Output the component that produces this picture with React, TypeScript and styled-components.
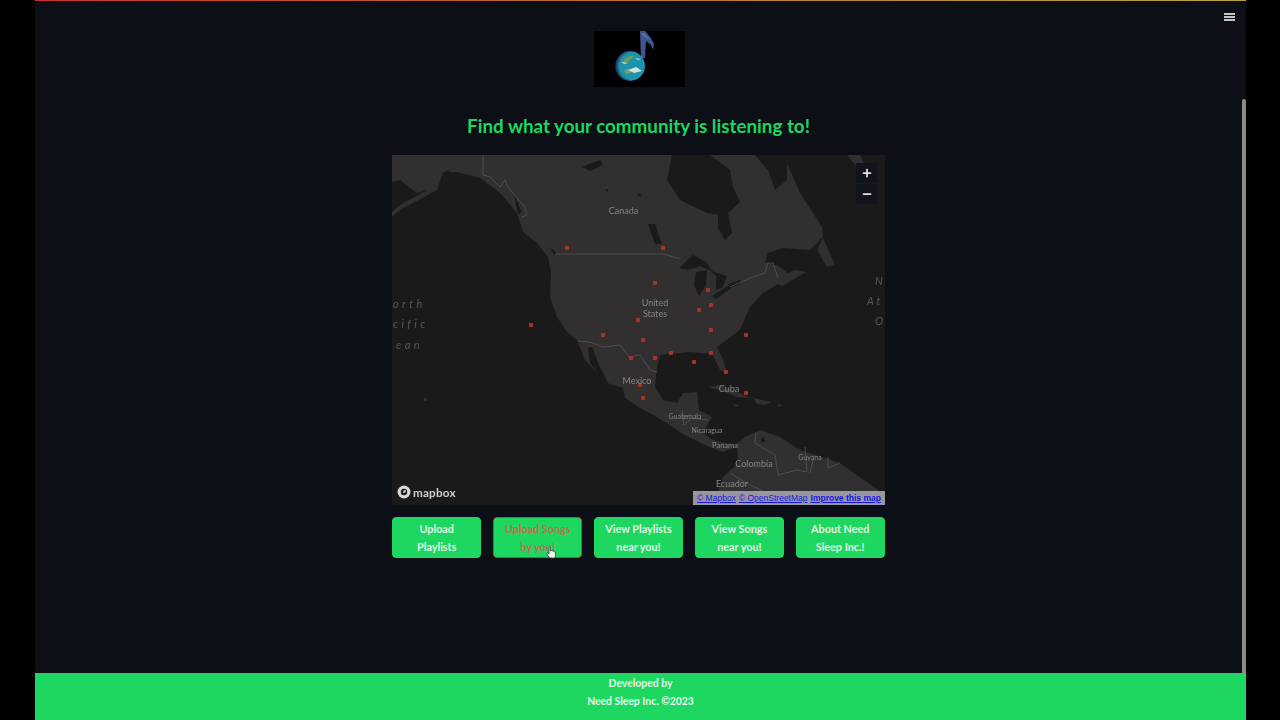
import React from 'react';
import styled, { createGlobalStyle } from 'styled-components';
import { Plus, Minus } from 'lucide-react';

const GlobalStyle = createGlobalStyle`
  html, body {
    margin: 0;
    padding: 0;
    height: 100%;
    background: #000;
    overflow: hidden;
  }
`;

const navItems: { top: string; bottom: string; hovered?: boolean }[] = [
  { top: 'Upload', bottom: 'Playlists' },
  { top: 'Upload Songs', bottom: 'by you!', hovered: true },
  { top: 'View Playlists', bottom: 'near you!' },
  { top: 'View Songs', bottom: 'near you!' },
  { top: 'About Need', bottom: 'Sleep Inc.!' },
];

// map shapes are in page coordinates, the svg viewBox starts at the map corner
const LAND =
  '392,155 787,155 787,163 800,193 822,227 823,237 810,250 783,248 768,253 765,262 778,266 788,273 795,270 806,272 782,286 778,284 763,293 750,307 740,330 717,347 723,360 727,373 720,370 712,354 690,352 660,355 657,367 655,387 663,400 677,403 683,393 697,392 699,410 712,417 703,433 713,440 735,445 745,437 760,430 780,437 800,450 840,463 878,490 880,505 718,505 718,493 723,477 738,463 737,447 723,452 707,446 683,434 668,424 653,415 640,408 625,398 623,388 607,383 585,360 577,340 567,332 557,317 550,297 551,273 548,257 537,243 523,232 517,213 500,193 480,178 457,172 443,173 437,190 400,210 392,217';

const WATER = [
  '392,182 400,180 417,193 428,190 400,205 392,212',
  '672,155 667,180 680,200 707,213 718,215 718,228 725,240 732,233 728,213 740,202 733,187 730,170 710,155',
  '755,155 768,170 775,190 787,180 787,155',
  '679,268 693,255 706,262 713,272 700,266 688,270',
  '696,272 707,270 706,285 699,296 694,285',
  '711,271 727,276 722,288 716,290 716,276',
  '712,296 728,286 733,287 716,299',
  '728,284 741,280 740,284 730,288',
  '648,224 655,224 662,244 655,244',
  '582,167 600,160 603,165 590,171',
  '605,190 608,189 608,192',
  '636,195 640,193 642,197',
  '550,248 556,252 555,256',
  '588,348 592,347 598,363 608,383 603,380 590,363',
  '443,173 448,170 452,176 438,190',
  '514,195 522,212 518,214',
  '760,360 762,358 763,361',
  '761,440 763,436 765,441 762,443',
  '788,253 802,254 796,262 789,260',
];

const ISLANDS = [
  '847,155 857,167 867,170 860,155',
  '817,250 823,238 835,265 827,267',
  '708,387 720,385 740,393 750,398 737,397 720,390',
  '753,398 772,402 765,405 757,404',
  '733,404 739,405 736,407',
  '777,404 783,405 779,407',
  '424,398 427,398 427,401 424,401',
];

const BORDERS = [
  '555,254 664,254 667,255 680,259',
  '730,287 750,278 765,273 768,263 773,263 778,278',
  '483,155 483,175 490,177 500,187 505,180 508,187 525,207 527,215 522,217',
  '578,341 590,342 603,347 620,345 630,358 637,355 640,355 650,370 657,372',
  '682,410 684,425 692,418 708,420',
  '756,433 755,443 775,455 778,475 797,470 807,472 805,447',
  '813,460 810,473',
  '828,457 828,468 840,463',
  '730,473 750,485 767,493',
];

const DOTS: [number, number][] = [
  [567, 248], [663, 248], [655, 283], [708, 290], [711, 305], [699, 310],
  [638, 320], [711, 330], [746, 335], [531, 325], [603, 335], [643, 340],
  [631, 358], [655, 358], [671, 353], [694, 362], [711, 353], [726, 372],
  [746, 393], [643, 398], [640, 385],
];

const Logo = () => (
  <LogoBox>
    <svg width="91" height="56" viewBox="594 31 91 56">
      <defs>
        <radialGradient id="halo" cx="0.6" cy="0.5" r="0.6">
          <stop offset="0.75" stopColor="#1d93ad" />
          <stop offset="0.9" stopColor="#23476b" />
          <stop offset="1" stopColor="#15233d" />
        </radialGradient>
      </defs>
      <path
        d="M640 31 L645 31 L651 38 L654 44 L653 50 L651 45 L646 41 L645 58 L641 58 Z"
        fill="#3d5590"
      />
      <path d="M641 33 L644 33 L650 40 L645 37 Z" fill="#5a72ad" />
      <circle cx="630" cy="66" r="15" fill="url(#halo)" />
      <path d="M622 62 C625 57 630 55 634 56 L630 60 L625 64 Z" fill="#6f9a5a" />
      <path d="M624 71 C628 67 632 70 631 73 L626 74 Z" fill="#7a9f66" />
      <path d="M628 70 L636 67 L642 71 L634 73 Z" fill="#d5e2d8" />
      <path d="M621 62 L628 63 L624 64 Z M635 58 L641 59 L638 60 Z" fill="#c8dad2" />
    </svg>
  </LogoBox>
);

const PlaceLabel: React.FC<{ x: string; y: string; size: number; children: string }> = (props) => (
  <text x={props.x} y={props.y} fontSize={props.size} textAnchor="middle">
    {props.children}
  </text>
);

const MapDrawing = () => (
  <MapSvg viewBox="392 155 493 350">
    <rect x="392" y="155" width="493" height="350" fill="#1a1a1b" />
    <polygon points={LAND} fill="#312f30" />
    {ISLANDS.map((p, i) => (
      <polygon key={i} points={p} fill="#312f30" />
    ))}
    {WATER.map((p, i) => (
      <polygon key={i} points={p} fill="#1a1a1b" />
    ))}
    {BORDERS.map((p, i) => (
      <polyline key={i} points={p} fill="none" stroke="#555456" strokeWidth="0.8" />
    ))}
    {DOTS.map(([x, y], i) => (
      <rect key={i} x={x - 2} y={y - 2} width="4" height="4" rx="1" fill="#a8332a" />
    ))}
    <g fontFamily="Lato, sans-serif" fill="#858486">
      <PlaceLabel x="623.5" y="214" size={9}>Canada</PlaceLabel>
      <PlaceLabel x="655" y="306" size={9}>United</PlaceLabel>
      <PlaceLabel x="655" y="317" size={9}>States</PlaceLabel>
      <PlaceLabel x="637" y="384" size={9}>Mexico</PlaceLabel>
      <PlaceLabel x="729" y="392" size={9}>Cuba</PlaceLabel>
      <PlaceLabel x="685" y="419" size={7}>Guatemala</PlaceLabel>
      <PlaceLabel x="707" y="433" size={7}>Nicaragua</PlaceLabel>
      <PlaceLabel x="725" y="448" size={7.5}>Panama</PlaceLabel>
      <PlaceLabel x="754" y="467" size={9}>Colombia</PlaceLabel>
      <PlaceLabel x="810" y="460" size={7}>Guyana</PlaceLabel>
      <PlaceLabel x="732" y="487" size={9}>Ecuador</PlaceLabel>
    </g>
    <g fontFamily="Lato, sans-serif" fontStyle="italic" fontSize="11" fill="#565557">
      <text x="393" y="308" letterSpacing="3.4">orth</text>
      <text x="393" y="328" letterSpacing="3.4">cific</text>
      <text x="396" y="349" letterSpacing="3.4">ean</text>
      <text x="875" y="285">N</text>
      <text x="867" y="305" letterSpacing="3">At</text>
      <text x="875" y="325">O</text>
    </g>
  </MapSvg>
);

const MapboxLogo = () => (
  <MapboxMark>
    <svg width="14" height="14" viewBox="0 0 14 14">
      <circle cx="7" cy="7" r="6.5" fill="#d8d8d8" />
      <circle cx="7" cy="7" r="3.2" fill="#1a1a1b" />
      <path d="M6 8 L6.6 5.4 L9 5 L8.4 7.4 Z" fill="#d8d8d8" />
    </svg>
    <MapboxText>mapbox</MapboxText>
  </MapboxMark>
);

const HandCursor = () => (
  <CursorWrap>
    <svg width="11" height="13" viewBox="0 0 11 13">
      <path
        d="M3 1 C3 0.3 4.4 0.3 4.4 1 L4.4 5 L5 4.6 C5.6 4.4 6 4.6 6.2 5 C6.8 4.7 7.4 4.9 7.6 5.4 C8.2 5.2 9 5.4 9.3 6 L9.6 9 C9.6 10.5 9 11.2 8.5 12 L3.6 12 C3 10.8 1.8 9.6 0.8 8 C0.4 7.2 1.2 6.6 2 7.2 L3 8 Z"
        fill="#f2f2f2"
        stroke="#3a3a3a"
        strokeWidth="0.8"
      />
    </svg>
  </CursorWrap>
);

const App: React.FC = () => {
  return (
    <>
      <GlobalStyle />
      <Page>
        <Main>
          <TopLine />
          <Body>
            <Content>
              <MenuRow>
                <MenuIcon>
                  <span />
                  <span />
                  <span />
                </MenuIcon>
              </MenuRow>
              <Logo />
              <Title>Find what your community is listening to!</Title>
              <MapBox>
                <MapDrawing />
                <ZoomControls>
                  <ZoomButton>
                    <Plus size={12} strokeWidth={3.5} />
                  </ZoomButton>
                  <ZoomButton>
                    <Minus size={12} strokeWidth={3.5} />
                  </ZoomButton>
                </ZoomControls>
                <MapboxLogo />
                <Attribution>
                  <a>© Mapbox</a>
                  <a>© OpenStreetMap</a>
                  <strong>Improve this map</strong>
                </Attribution>
              </MapBox>
              <NavRow>
                {navItems.map((item, i) => (
                  <NavButton key={i} hovered={item.hovered}>
                    {item.top}
                    <br />
                    {item.bottom}
                    {item.hovered && <HandCursor />}
                  </NavButton>
                ))}
              </NavRow>
            </Content>
            <ScrollTrack>
              <ScrollThumb />
            </ScrollTrack>
          </Body>
          <Footer>
            Developed by
            <br />
            Need Sleep Inc. ©2023
          </Footer>
        </Main>
      </Page>
    </>
  );
};

export default App;

const Page = styled.div`
  display: flex;
  justify-content: flex-start;
  width: 1280px;
  height: 720px;
  padding-left: 35px;
  box-sizing: border-box;
  background: #000;
  font-family: Lato, 'Noto Sans', sans-serif;
`;

const Main = styled.div`
  display: flex;
  flex-direction: column;
  width: 1211px;
  height: 720px;
  background: #0c0f16;
`;

const TopLine = styled.div`
  height: 1px;
  flex: none;
  background: linear-gradient(90deg, #c8322c, #b8802e 60%, #b9a33a);
`;

const Body = styled.div`
  display: flex;
  flex: 1;
  min-height: 0;
`;

const Content = styled.div`
  display: flex;
  flex-direction: column;
  align-items: center;
  flex: 1;
  min-width: 0;
`;

const MenuRow = styled.div`
  display: flex;
  justify-content: flex-end;
  align-self: stretch;
  height: 30px;
  padding: 12px 7px 0 0;
  box-sizing: border-box;
`;

const MenuIcon = styled.div`
  display: flex;
  flex-direction: column;
  gap: 1.5px;
  width: 11px;

  span {
    display: block;
    height: 1.5px;
    background: #c4c4c6;
  }
`;

const LogoBox = styled.div`
  width: 91px;
  height: 56px;
  margin-left: 2px;
  background: #000;

  svg {
    display: block;
    filter: blur(0.3px);
  }
`;

const Title = styled.h1`
  margin: 26px 0 0;
  height: 25px;
  font-size: 18.8px;
  line-height: 25px;
  font-weight: 700;
  color: #1ed760;
`;

const MapBox = styled.div`
  position: relative;
  width: 493px;
  height: 350px;
  margin-top: 17px;
  overflow: hidden;
`;

const MapSvg = styled.svg`
  display: block;
  width: 493px;
  height: 350px;
  filter: blur(0.5px);
`;

const ZoomControls = styled.div`
  position: absolute;
  top: 8px;
  right: 8px;
  display: flex;
  flex-direction: column;
  gap: 1px;
`;

const ZoomButton = styled.div`
  display: flex;
  align-items: center;
  justify-content: center;
  width: 21px;
  height: 20px;
  background: #12141b;
  color: #e4e4e4;
`;

const MapboxMark = styled.div`
  position: absolute;
  left: 5px;
  bottom: 6px;
  display: flex;
  align-items: center;
  gap: 2px;
  filter: blur(0.3px);
`;

const MapboxText = styled.span`
  font-size: 11.7px;
  line-height: 14px;
  font-weight: 700;
  color: #cfcfcf;
  letter-spacing: 0.2px;
`;

const Attribution = styled.div`
  position: absolute;
  right: 0;
  bottom: 0;
  display: flex;
  gap: 3px;
  width: 192px;
  height: 14px;
  padding: 0 3px 0 4px;
  box-sizing: border-box;
  align-items: center;
  background: #98979d;
  font-family: 'Liberation Sans', Arial, sans-serif;
  font-size: 8.5px;
  line-height: 14px;
  color: #1717e0;
  white-space: nowrap;
  overflow: hidden;

  a {
    text-decoration: underline;
  }

  strong {
    font-weight: 700;
    text-decoration: underline;
  }
`;

const NavRow = styled.div`
  display: flex;
  gap: 11.4px;
  width: 493px;
  margin-top: 12px;
`;

const NavButton = styled.div<{ hovered?: boolean }>`
  position: relative;
  flex: 1;
  height: 41px;
  box-sizing: border-box;
  border: 1px solid ${(props) => (props.hovered ? '#d63a2f' : '#1ed760')};
  border-radius: 4px;
  background: #1ed760;
  color: ${(props) => (props.hovered ? '#b8734f' : '#e0f4e7')};
  font-size: 10.8px;
  font-weight: 700;
  line-height: 17.5px;
  text-align: center;
  padding-top: 2px;
  white-space: nowrap;
`;

const CursorWrap = styled.div`
  position: absolute;
  left: 52px;
  top: 28px;
  line-height: 0;
`;

const ScrollTrack = styled.div`
  flex: none;
  width: 4px;
  padding-top: 98px;
  box-sizing: border-box;
  display: flex;
`;

const ScrollThumb = styled.div`
  flex: 1;
  background: #8a8a8c;
  border-radius: 2px 2px 0 0;
`;

const Footer = styled.footer`
  flex: none;
  height: 47px;
  padding-top: 1px;
  box-sizing: border-box;
  background: #1ed760;
  color: #e8f6ec;
  font-size: 10.4px;
  font-weight: 700;
  line-height: 18px;
  text-align: center;
`;
